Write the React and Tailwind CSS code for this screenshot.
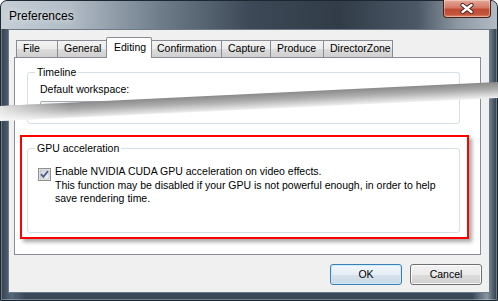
import React from 'react';

const tabs = [
  { label: 'File', w: 'w-[41px]' },
  { label: 'General', w: 'w-[51px]' },
  { label: 'Editing', w: 'w-[46px]', active: true },
  { label: 'Confirmation', w: 'w-[71px]' },
  { label: 'Capture', w: 'w-[49px]' },
  { label: 'Produce', w: 'w-[53px]' },
  { label: 'DirectorZone', w: 'w-[70px]', last: true },
];

// Windows 7 close glyph
const CloseGlyph = () => (
  <svg width="14" height="11" viewBox="0 0 14 11">
    <path d="M2.5 2 L11.5 9 M11.5 2 L2.5 9" stroke="#4a1c16" strokeWidth="4.2" strokeLinecap="round" />
    <path d="M2.5 2 L11.5 9 M11.5 2 L2.5 9" stroke="#ffffff" strokeWidth="2.4" strokeLinecap="round" />
  </svg>
);

const Checkbox = () => (
  <svg width="13" height="13" viewBox="0 0 13 13" className="shrink-0">
    <defs>
      <linearGradient id="cbfill" x1="0" y1="0" x2="1" y2="1">
        <stop offset="0" stopColor="#cfd3d9" />
        <stop offset="1" stopColor="#f4f5f7" />
      </linearGradient>
    </defs>
    <rect x="0.5" y="0.5" width="12" height="12" fill="#f4f4f4" stroke="#8e8f8f" />
    <rect x="2" y="2" width="9" height="9" fill="url(#cbfill)" stroke="#aeb3b9" strokeWidth="0.6" />
    <path d="M3 6.2 L5.3 8.8 L10 3.2" fill="none" stroke="#4a5f8e" strokeWidth="1.8" />
  </svg>
);

// the grey "cut" strip across the screenshot
const CutStrip = () => (
  <svg className="absolute left-0 top-0 pointer-events-none" width="498" height="301" viewBox="0 0 498 301">
    <defs>
      <linearGradient id="strip" gradientUnits="userSpaceOnUse" x1="0" y1="106" x2="0.72" y2="121">
        <stop offset="0" stopColor="#8a8a8a" />
        <stop offset="0.45" stopColor="#adadad" />
        <stop offset="0.85" stopColor="#dadada" />
        <stop offset="1" stopColor="#ececec" />
      </linearGradient>
      <linearGradient id="stripfade" gradientUnits="userSpaceOnUse" x1="0" y1="0" x2="70" y2="0">
        <stop offset="0" stopColor="#ffffff" stopOpacity="0.75" />
        <stop offset="1" stopColor="#ffffff" stopOpacity="0" />
      </linearGradient>
    </defs>
    <polygon points="0,106 498,82 498,98 0,121" fill="url(#strip)" />
    <polygon points="0,106 498,82 498,98 0,121" fill="url(#stripfade)" />
  </svg>
);

export default function App() {
  return (
    <div className="relative w-[498px] h-[301px] overflow-hidden bg-white font-['Liberation_Sans',Arial,sans-serif] text-black">
      {/* window frame */}
      <div className="h-full flex flex-col rounded-t-[7px] border border-[#1d2731] bg-[linear-gradient(to_right,#33414f,#56657a_2%,#3a4858_5%,#3a4858_95%,#8896a4_98%,#2d3a48)] px-[7px] pb-[7px] shadow-[inset_0_0_0_1px_rgba(255,255,255,0.3)]">
        {/* title bar */}
        <div className="-mx-[7px] h-[28px] shrink-0 flex justify-between rounded-t-[6px] bg-[linear-gradient(to_right,#c6ced6_0%,#b1bcc6_14%,#6f7d8b_32%,#3d4956_50%,#313c48_68%,#4c5866_84%,#8c97a2_92%,#b3bcc5_100%)] pl-[8px] pr-[6px]">
          <div className="self-center pt-[1px] text-[12px] leading-[14px] [text-shadow:0_0_6px_rgba(255,255,255,0.9)]">
            Preferences
          </div>
          <div className="w-[48px] h-[18px] -mt-[1px] flex items-center justify-center rounded-b-[4px] border border-t-0 border-[#4b1f18] bg-[linear-gradient(to_bottom,#e5a999_0%,#d47a66_45%,#c14a33_55%,#c4563d_85%,#de8f6f_100%)] shadow-[inset_0_0_0_1px_rgba(255,255,255,0.35)]">
            <CloseGlyph />
          </div>
        </div>

        {/* client area */}
        <div className="flex-1 flex flex-col bg-[#f0f0f0] border border-[#6d7a88]">
          <div className="ml-[5px] mt-[7px] w-[467px]">
            {/* tab strip */}
            <div className="flex items-end h-[20px] pl-[2px] text-[10.5px]">
              {tabs.map((t) =>
                t.active ? (
                  <div
                    key={t.label}
                    className={`${t.w} relative z-10 -mx-[2px] -mb-[1px] h-[21px] flex items-center pl-[7px] pb-[1px] bg-white border border-b-0 border-[#898c95] rounded-t-[2px]`}
                  >
                    {t.label}
                  </div>
                ) : (
                  <div
                    key={t.label}
                    className={`${t.w} h-[17px] flex items-center pl-[6px] border-l border-t border-[#898c95] ${t.last ? 'border-r' : ''} bg-[linear-gradient(to_bottom,#f3f3f3,#ebebeb_50%,#dddddd_51%,#cfcfcf)]`}
                  >
                    {t.label}
                  </div>
                )
              )}
            </div>

            {/* tab panel */}
            <div className="h-[198px] bg-white border border-[#898c95] text-[10.5px] leading-[13px]">
              <fieldset className="ml-[12px] mt-[8px] w-[433px] h-[58px] border border-[#d5dfe5] rounded-[3px] px-[12px]">
                <legend className="ml-[-5px] px-[2px] leading-[13px]">Timeline</legend>
                <div className="mt-[4px]">Default workspace:</div>
                {/* combo box, mostly hidden under the cut strip */}
                <div className="mt-[5px] w-[160px] h-[6px] border border-b-0 border-[#a5acb5] rounded-t-[2px] bg-[#f2f2f2]" />
              </fieldset>

              {/* highlighted group */}
              <div className="ml-[5px] mt-[11px] w-[449px] h-[104px] border-2 border-[#ff0000] shadow-[3px_3px_4px_rgba(0,0,0,0.35)] pl-[5px] pt-[5px]">
                <fieldset className="w-[433px] h-[91px] border border-[#d5dfe5] rounded-[3px] pl-[10px]">
                  <legend className="ml-[-3px] px-[2px] leading-[13px]">GPU acceleration</legend>
                  <div className="mt-[10px] flex items-start gap-[4px]">
                    <div className="mt-[3px]">
                      <Checkbox />
                    </div>
                    <div className="leading-[13.5px]">
                      <div>Enable NVIDIA CUDA GPU acceleration on video effects.</div>
                      <div>This function may be disabled if your GPU is not powerful enough, in order to help</div>
                      <div>save rendering time.</div>
                    </div>
                  </div>
                </fieldset>
              </div>
            </div>
          </div>

          {/* dialog buttons */}
          <div className="mt-[9px] mr-[7px] flex justify-end gap-[8px] text-[10.5px]">
            <button className="w-[72px] h-[21px] rounded-[3px] border border-[#3c7fb1] bg-[linear-gradient(to_bottom,#f1f6fa,#e6eef5_50%,#d6e2ec_51%,#cad9e6)] shadow-[inset_0_0_0_1px_rgba(200,235,255,0.9)]">
              OK
            </button>
            <button className="w-[72px] h-[21px] rounded-[3px] border border-[#707070] bg-[linear-gradient(to_bottom,#f2f2f2,#ebebeb_50%,#dddddd_51%,#cfcfcf)] shadow-[inset_0_0_0_1px_rgba(255,255,255,0.8)]">
              Cancel
            </button>
          </div>
        </div>
      </div>

      <CutStrip />
    </div>
  );
}
